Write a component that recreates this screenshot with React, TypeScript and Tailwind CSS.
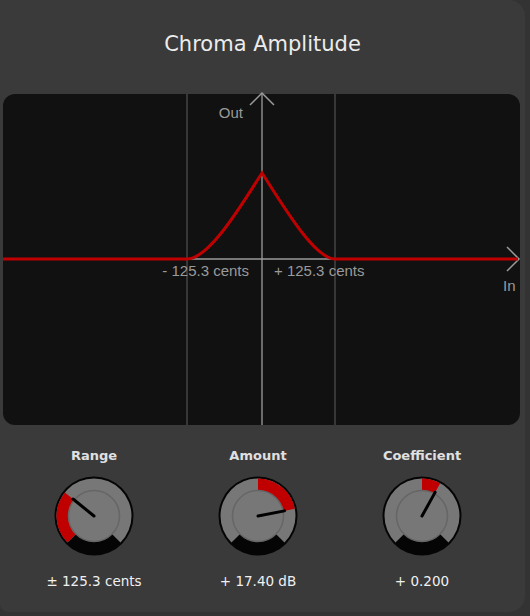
import React from "react";

const font = { fontFamily: '"DejaVu Sans", Verdana, sans-serif' };
const arial = { fontFamily: '"Liberation Sans", Arial, sans-serif' };

function pt(cx: number, cy: number, r: number, deg: number) {
  const a = (deg * Math.PI) / 180;
  return [cx + r * Math.sin(a), cy - r * Math.cos(a)];
}

function sector(cx: number, cy: number, r0: number, r1: number, a0: number, a1: number) {
  const large = a1 - a0 > 180 ? 1 : 0;
  const [x1, y1] = pt(cx, cy, r1, a0);
  const [x2, y2] = pt(cx, cy, r1, a1);
  const [x3, y3] = pt(cx, cy, r0, a1);
  const [x4, y4] = pt(cx, cy, r0, a0);
  return `M${x1} ${y1} A${r1} ${r1} 0 ${large} 1 ${x2} ${y2} L${x3} ${y3} A${r0} ${r0} 0 ${large} 0 ${x4} ${y4} Z`;
}

function Knob({ from, to, angle }: { from: number; to: number; angle: number }) {
  const c = 40;
  const [px, py] = pt(c, c, 27, angle);
  return (
    <svg width="80" height="80" viewBox="0 0 80 80">
      <circle cx={c} cy={c} r={39.5} fill="#050505" />
      <path d={sector(c, c, 25, 37.5, -135, 135)} fill="#777777" />
      <path d={sector(c, c, 25, 37.5, from, to)} fill="#c00000" />
      <circle cx={c} cy={c} r={25.5} fill="#777777" stroke="#666666" strokeWidth="1.5" />
      <line x1={c} y1={c} x2={px} y2={py} stroke="#000" strokeWidth="3" strokeLinecap="round" />
    </svg>
  );
}

const knobs = [
  { label: "Range", value: "± 125.3 cents", from: -135, to: -51, angle: -51 },
  { label: "Amount", value: "+ 17.40 dB", from: 0, to: 79, angle: 79 },
  { label: "Coefficient", value: "+ 0.200", from: 0, to: 29, angle: 29 },
];

function Graph() {
  return (
    <div className="ml-[3px] w-[517px] h-[331px] rounded-xl bg-[#111111]">
      <svg width="517" height="331" className="overflow-visible">
        <line x1="184" y1="0" x2="184" y2="331" stroke="#444" strokeWidth="1.5" />
        <line x1="332" y1="0" x2="332" y2="331" stroke="#444" strokeWidth="1.5" />
        <line x1="259" y1="0" x2="259" y2="331" stroke="#8a8a8a" strokeWidth="1.5" />
        <line x1="0" y1="165" x2="516" y2="165" stroke="#9a9a9a" strokeWidth="1.5" />
        <polyline points="247,11 259,-1 271,11" fill="none" stroke="#9a9a9a" strokeWidth="1.5" />
        <polyline points="504,153 516,165 504,177" fill="none" stroke="#9a9a9a" strokeWidth="1.5" />
        <path
          d="M0 165 L184 165 C207 165 240 108 259 79 C278 108 311 165 332 165 L515 165"
          fill="none"
          stroke="#c00000"
          strokeWidth="3"
        />
        <g fill="#9a9a9a" fontSize="15">
          <text x="240" y="24" textAnchor="end" style={arial}>Out</text>
          <text x="500" y="197" style={arial}>In</text>
          <text x="246" y="182" textAnchor="end" style={arial}>- 125.3 cents</text>
          <text x="271" y="182" style={arial}>+ 125.3 cents</text>
        </g>
      </svg>
    </div>
  );
}

export default function App() {
  return (
    <div className="w-[530px] h-[616px] bg-[#333333] overflow-hidden">
      <div className="w-[525px] h-[612px] bg-[#3a3a3a] rounded-r-2xl rounded-bl-lg flex flex-col" style={font}>
        <div className="h-[94px] flex items-center justify-center pb-1">
          <h1 className="text-[21px] text-[#ececec]">Chroma Amplitude</h1>
        </div>
        <Graph />
        <div className="flex px-[12px] pt-[21px]">
          {knobs.map((k) => (
            <div key={k.label} className="w-[164px] flex flex-col items-center">
              <div className="text-[13px] font-bold text-[#e0e0e0] leading-5">{k.label}</div>
              <div className="mt-[10px]">
                <Knob from={k.from} to={k.to} angle={k.angle} />
              </div>
              <div className="mt-[15px] text-[13.5px] text-[#f0f0f0] leading-5">{k.value}</div>
            </div>
          ))}
        </div>
      </div>
    </div>
  );
}
